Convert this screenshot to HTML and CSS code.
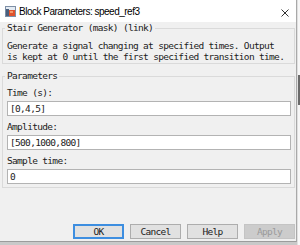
FILE: index.html
```html
<!DOCTYPE html>
<html>
<head>
	<title>Block Parameters: speed_ref3</title>
	<link rel="stylesheet" href="styles.css">
</head>
<body>
	<div class="window">
		<div class="titlebar">
			<svg class="app-icon" width="11" height="11" viewBox="0 0 11 11">
				<rect x="0.5" y="0.5" width="10" height="10" fill="#e4ebf3" stroke="#7d8fa6"/>
				<rect x="1" y="3" width="3" height="7" fill="#4a5f7c"/>
				<rect x="4" y="4" width="6" height="6" fill="#e0522c"/>
				<rect x="5" y="5" width="3" height="2" fill="#f39a6b"/>
			</svg>
			<span class="title">Block Parameters: speed_ref3</span>
			<svg class="close" width="8" height="8" viewBox="0 0 8 8">
				<path d="M0.5 0.5 L7.5 7.5 M7.5 0.5 L0.5 7.5" stroke="#333" stroke-width="1" fill="none"/>
			</svg>
		</div>

		<div class="content">
			<fieldset class="group desc">
				<legend>Stair Generator (mask) (link)</legend>
				<p>Generate a signal changing at specified times. Output<br>is kept at 0 until the first specified transition time.</p>
			</fieldset>

			<fieldset class="group params">
				<legend>Parameters</legend>
				<label>Time (s):</label>
				<input type="text" value="[0,4,5]">
				<label>Amplitude:</label>
				<input type="text" value="[500,1000,800]">
				<label>Sample time:</label>
				<input type="text" value="0">
			</fieldset>

			<div class="buttons">
				<button class="btn default">OK</button>
				<button class="btn">Cancel</button>
				<button class="btn">Help</button>
				<button class="btn" disabled>Apply</button>
			</div>
		</div>
	</div>
	<div class="behind">
		<div class="thumb"></div>
	</div>
</body>
</html>
```

FILE: styles.css
```css
html, body {
	margin: 0;
	padding: 0;
	width: 300px;
	height: 245px;
	overflow: hidden;
}
body {
	display: flex;
	align-items: flex-start;
	background-color: #c9c9c9;
	font-family: "DejaVu Sans Mono", monospace;
	font-size: 9.5px;
	letter-spacing: -0.68px;
	color: #1b1b1b;
}
.window {
	box-sizing: border-box;
	width: 297px;
	height: 242px;
	background-color: #f0f0f0;
	border-right: 1px solid #a9a9a9;
	border-bottom: 1px solid #9c9c9c;
}
.titlebar {
	height: 22px;
	background-color: #ffffff;
	display: flex;
	align-items: center;
	padding-left: 5px;
	padding-right: 6px;
}
.app-icon {
	flex: none;
	margin-top: 1px;
}
.title {
	margin-left: 3px;
	font-family: "Liberation Sans", Arial, sans-serif;
	font-size: 10px;
	letter-spacing: -0.5px;
	color: #000;
	flex: 1;
}
.close {
	flex: none;
	margin-top: 4px;
	margin-right: 1px;
}
.content {
	padding: 0 1px 0 2px;
}
.group {
	margin: 0;
	padding: 0 3px 0 4px;
	border: 1px solid #dadada;
}
.group legend {
	padding: 0 2px;
	margin-left: -2px;
	line-height: 12px;
}
.desc p {
	margin: 6px 0 1px 0;
	line-height: 11px;
}
.params {
	margin-top: 6px;
	padding-top: 5px;
	padding-bottom: 3px;
	display: flex;
	flex-direction: column;
}
.params label {
	line-height: 12px;
	margin-top: 5px;
}
.params label:first-of-type {
	margin-top: 0;
}
.params input {
	box-sizing: border-box;
	height: 15px;
	margin: 2px 0 0 0;
	padding: 0 2px;
	border: 1px solid #b3b3b3;
	background: #ffffff;
	font-family: "DejaVu Sans Mono", monospace;
	font-size: 9.5px;
	letter-spacing: -0.68px;
	color: #1b1b1b;
	outline: none;
}
.buttons {
	display: flex;
	justify-content: flex-end;
	gap: 6px;
	margin-top: 36px;
}
.btn {
	box-sizing: border-box;
	width: 51px;
	height: 15px;
	padding: 0;
	background-color: #e1e1e1;
	border: 1px solid #adadad;
	font-family: "DejaVu Sans Mono", monospace;
	font-size: 9.5px;
	letter-spacing: -0.68px;
	color: #1b1b1b;
	line-height: 13px;
}
.btn.default {
	border: 2px solid #3d8ee0;
	line-height: 11px;
}
.btn:disabled {
	background-color: #cccccc;
	border-color: #c4c4c4;
	color: #9a9a9a;
}
.behind {
	flex: 1;
	height: 245px;
	background-color: #f7f7f7;
	border-left: 1px solid #e0e0e0;
}
.thumb {
	margin-top: 75px;
	height: 30px;
	background-color: #6b6b6b;
}
```
